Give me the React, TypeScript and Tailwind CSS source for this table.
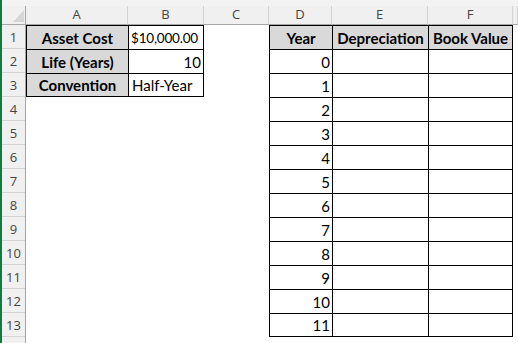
import React from "react";

const colLetters = ["A", "B", "C", "D", "E", "F", ""];
const cellFont = "font-['Lato','Liberation_Sans',sans-serif] leading-[18px] text-black";

type Cell = {
  text?: string;
  bold?: boolean;
  fill?: boolean;
  align?: "left" | "center" | "right";
  pad?: string;
  size?: string;
  border?: boolean;
  r?: boolean;
  b?: boolean;
};

function DataCell({ c }: { c: Cell }) {
  const cls = [
    "flex items-end pb-[2px] overflow-hidden whitespace-nowrap",
    cellFont,
    c.size ?? "text-[15px]",
    c.bold ? "font-bold" : "",
    c.fill ? "bg-[#d9d9d9]" : "bg-white",
    c.align === "center" ? "justify-center" : c.align === "right" ? "justify-end" : "justify-start",
    c.pad ?? "",
    c.border ? "border-t border-l border-black" : "",
    c.r ? "border-r border-black" : "",
    c.b ? "border-b border-black" : "",
  ].join(" ");
  return <div className={cls}>{c.text}</div>;
}

export default function App() {
  const rows: Cell[][] = [];
  for (let i = 1; i <= 14; i++) {
    const row: Cell[] = [{}, {}, {}, {}, {}, {}, {}];
    if (i === 1) {
      row[0] = { text: "Asset Cost", bold: true, fill: true, align: "center", border: true };
      row[1] = {
        text: "$10,000.00",
        align: "right",
        pad: "pr-[5px]",
        size: "text-[13.5px] tracking-[-0.2px]",
        border: true,
        r: true,
      };
      row[3] = { text: "Year", bold: true, fill: true, align: "center", border: true };
      row[4] = { text: "Depreciation", bold: true, fill: true, align: "center", border: true };
      row[5] = { text: "Book Value", bold: true, fill: true, align: "center", border: true, r: true };
    } else if (i <= 13) {
      if (i === 2) {
        row[0] = { text: "Life (Years)", bold: true, fill: true, align: "center", border: true };
        row[1] = { text: "10", align: "right", pad: "pr-[2px]", border: true, r: true };
      }
      if (i === 3) {
        row[0] = { text: "Convention", bold: true, fill: true, align: "center", border: true, b: true };
        row[1] = { text: "Half-Year", align: "left", pad: "pl-[3px]", border: true, r: true, b: true };
      }
      const last = i === 13;
      row[3] = { text: String(i - 2), align: "right", pad: "pr-[2px]", border: true, b: last };
      row[4] = { border: true, b: last };
      row[5] = { border: true, r: true, b: last };
    }
    rows.push(row);
  }

  return (
    <div className="w-[518px] h-[343px] overflow-hidden bg-white flex flex-col border-l-2 border-[#117a41]">
      <div className="h-[6px] bg-[#f3f3f3] shrink-0" />
      <div className="grid grid-cols-[24px_102px_76px_65px_63px_96px_85px_1fr] grid-rows-[19px_repeat(14,24px)]">
        {/* header row */}
        <div className="relative bg-[#f0f0f0] border-r border-b border-[#a6a6a6]">
          <svg className="absolute left-[11px] top-[4px]" width="11" height="12" viewBox="0 0 11 12">
            <polygon points="11,0 11,12 0,12" fill="#d6d6d6" />
          </svg>
        </div>
        {colLetters.map((l, i) => (
          <div
            key={i}
            className="bg-[#f0f0f0] border-r border-b border-[#d2d2d2] border-b-[#a6a6a6] flex items-center justify-center font-['Open_Sans','Noto_Sans',sans-serif] text-[13px] text-[#444444]"
          >
            {l}
          </div>
        ))}
        {rows.map((row, ri) => (
          <React.Fragment key={ri}>
            <div className="bg-[#f0f0f0] border-r border-[#a6a6a6] shadow-[inset_0_-1px_0_#d4d4d4] flex items-center justify-center pt-[2px] font-['Open_Sans','Noto_Sans',sans-serif] text-[13px] text-[#444444]">
              {ri < 13 ? ri + 1 : ""}
            </div>
            {row.map((c, ci) => (
              <DataCell key={ci} c={c} />
            ))}
          </React.Fragment>
        ))}
      </div>
    </div>
  );
}
